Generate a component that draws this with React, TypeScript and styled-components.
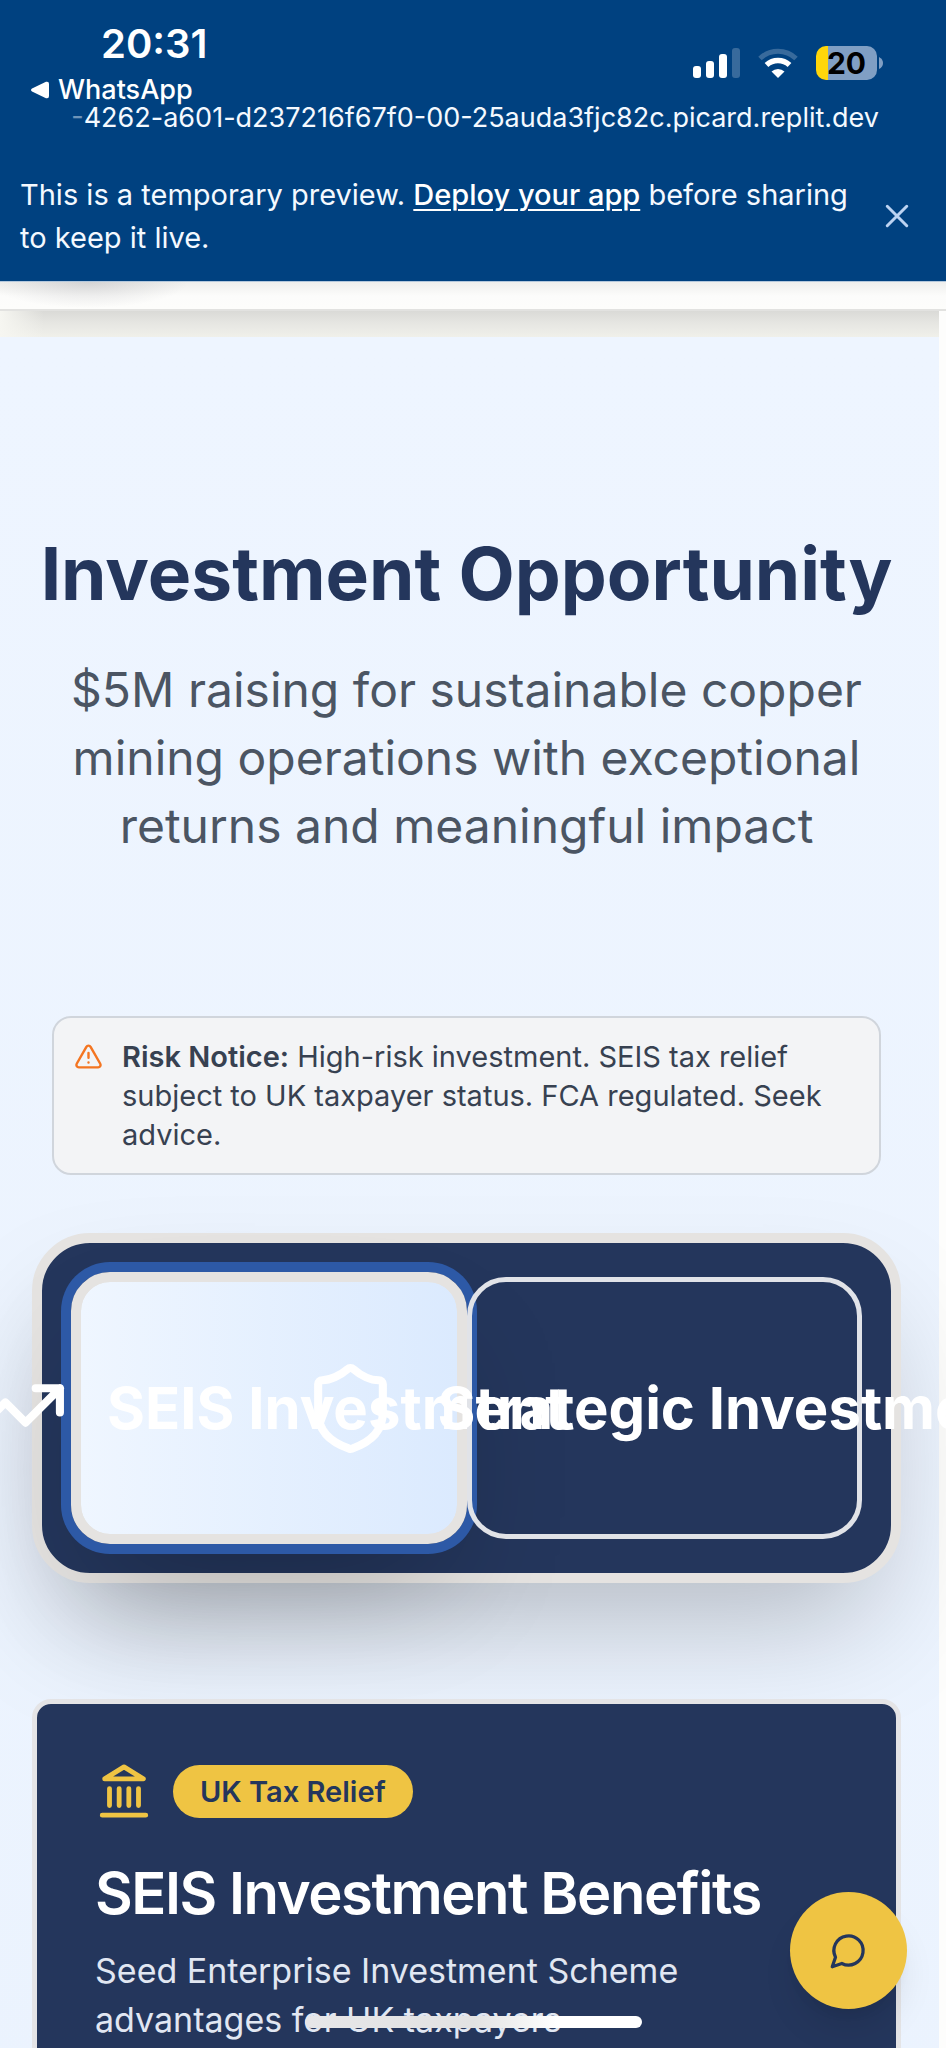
import React from "react";
import styled, { createGlobalStyle } from "styled-components";

const navy = "#24365c";
const gold = "#efc443";
const stone = "#e5e3e1";

const GlobalStyle = createGlobalStyle`
  * { box-sizing: border-box; }
  body {
    margin: 0;
    background: #fdfdfc;
    font-family: Inter, "Liberation Sans", sans-serif;
  }
  h1, h2, p { margin: 0; }
  button { font: inherit; color: inherit; cursor: pointer; }
`;

const Screen = styled.div`
  position: relative;
  display: flex;
  flex-direction: column;
  height: 100vh;
  overflow: hidden;
`;

const TopBar = styled.header`
  flex: none;
  background: #004180;
  color: #f4f9ff;
  border-bottom: 1px solid #b4c8dc;
`;

const StatusBar = styled.div`
  display: flex;
  justify-content: space-between;
  align-items: flex-start;
  padding: 24px 63px 0 31px;
`;

const StatusLeft = styled.div`
  display: flex;
  flex-direction: column;
  gap: 11px;
`;

const Time = styled.time`
  padding-left: 70px;
  font-size: 40px;
  line-height: 40px;
  font-weight: 600;
  color: #fff;
`;

const BackLink = styled.a`
  display: flex;
  align-items: center;
  gap: 9px;
  font-size: 27px;
  line-height: 30px;
  font-weight: 500;
  color: #fff;
  text-decoration: none;
`;

const StatusIcons = styled.div`
  display: flex;
  align-items: center;
  gap: 18px;
  padding-top: 22px;
`;

const Battery = styled.div`
  display: flex;
  align-items: center;
  gap: 2px;
`;

const BatteryBody = styled.span`
  display: block;
  width: 61px;
  height: 34px;
  border-radius: 10px;
  background: linear-gradient(90deg, #ffd60a 12px, #809fc4 12px);
  color: #000;
  font-size: 30px;
  line-height: 34px;
  font-weight: 700;
  text-align: center;
`;

const Address = styled.div`
  padding: 0 67px;
  font-size: 27px;
  line-height: 26px;
  text-align: right;
  white-space: nowrap;
`;

const Faded = styled.span`
  opacity: 0.45;
`;

const Banner = styled.div`
  display: flex;
  align-items: center;
  justify-content: space-between;
  gap: 24px;
  padding: 42px 31px 22px 20px;
`;

const BannerText = styled.p`
  font-size: 29px;
  line-height: 43px;

  a {
    color: #fff;
    font-weight: 500;
    text-underline-offset: 4px;
    text-decoration-thickness: 2px;
  }
`;

const CloseButton = styled.button`
  flex: none;
  display: flex;
  padding: 0;
  border: 0;
  background: none;
  color: #bcd3f2;
`;

const NavEdge = styled.div`
  flex: none;
  height: 29px;
  border-bottom: 2px solid #e2e2e0;
  background:
    radial-gradient(100px 26px at 88px 0, rgba(70, 70, 80, 0.16), rgba(70, 70, 80, 0)),
    linear-gradient(#efefed, #fcfcfb 14px, #fdfdfb);
`;

const Scroller = styled.main`
  flex: 1;
  min-height: 0;
  overflow: hidden;
`;

const NavShadow = styled.div`
  height: 26px;
  margin-right: 7px;
  background:
    linear-gradient(90deg, #f6f6f1, rgba(246, 246, 241, 0) 44px),
    linear-gradient(#dadad7, #e6e6e2 12px, #f0f0ea);
`;

const Section = styled.section`
  display: flex;
  flex-direction: column;
  margin-right: 7px;
  padding: 193px 38px 58px 32px;
  background: linear-gradient(#eef5ff, #ebf3fe);
`;

const Title = styled.h1`
  color: ${navy};
  font-size: 73px;
  line-height: 88px;
  font-weight: 700;
  text-align: center;
  white-space: nowrap;
`;

const Subtitle = styled.p`
  margin-top: 38px;
  padding: 0 20px;
  color: #4b5563;
  font-size: 48px;
  line-height: 68px;
  text-align: center;
`;

const Notice = styled.aside`
  display: flex;
  gap: 19px;
  margin: 156px 20px 58px;
  padding: 19px 20px;
  border: 2px solid #d0d5dc;
  border-radius: 19px;
  background: #f3f4f6;
  color: #374151;
  font-size: 29px;
  line-height: 39px;

  svg {
    flex: none;
    margin-top: 5px;
    color: #f47521;
  }
  strong { font-weight: 600; }
`;

const Tabs = styled.div`
  display: grid;
  grid-template-columns: 1fr 1fr;
  align-items: center;
  padding: 29px;
  border: 10px solid ${stone};
  border-radius: 58px;
  background: ${navy};
  box-shadow: 0 61px 121px -29px rgba(0, 0, 0, 0.25);
`;

const Tab = styled.button<{ $active?: boolean }>`
  display: flex;
  align-items: center;
  justify-content: center;
  gap: 39px;
  min-width: 0;
  height: ${(p) => (p.$active ? 272 : 262)}px;
  padding: 0;
  border: ${(p) => (p.$active ? 10 : 5)}px solid ${(p) => (p.$active ? stone : "#e1e3e8")};
  border-radius: 39px;
  background: ${(p) =>
    p.$active
      ? `linear-gradient(90deg, #eff6ff, #dbeafe) padding-box, linear-gradient(${stone}, ${stone}) border-box`
      : "transparent"};
  box-shadow: ${(p) =>
    p.$active ? "0 0 0 10px #2d59a6, 0 61px 121px -29px rgba(0, 0, 0, 0.25)" : "none"};
  color: #fff;
  font-size: 58px;
  line-height: 78px;
  font-weight: 700;
  white-space: nowrap;

  svg { flex: none; }
`;

const Card = styled.article`
  margin-top: 116px;
  padding: 58px;
  border: 5px solid #e4e4e6;
  border-radius: 19px;
  background: ${navy};
`;

const CardTop = styled.div`
  display: flex;
  align-items: center;
  gap: 20px;
  color: ${gold};
`;

const Pill = styled.span`
  padding: 0 27px;
  border-radius: 27px;
  background: ${gold};
  color: ${navy};
  font-size: 29px;
  line-height: 53px;
  font-weight: 600;
`;

const CardTitle = styled.h2`
  margin-top: 44px;
  color: #fff;
  font-size: 58px;
  line-height: 58px;
  font-weight: 600;
  letter-spacing: -0.025em;
`;

const CardText = styled.p`
  max-width: 640px;
  margin-top: 24px;
  color: #e1e7f2;
  font-size: 34px;
  line-height: 49px;
`;

const ChatButton = styled.button`
  position: absolute;
  right: 39px;
  bottom: 39px;
  display: flex;
  align-items: center;
  justify-content: center;
  width: 117px;
  height: 117px;
  padding: 0;
  border: 0;
  border-radius: 50%;
  background: ${gold};
  color: ${navy};
  box-shadow: 0 24px 36px -7px rgba(0, 0, 0, 0.1), 0 10px 15px -10px rgba(0, 0, 0, 0.1);
`;

const HomeIndicator = styled.div`
  position: absolute;
  left: 50%;
  bottom: 20px;
  width: 337px;
  height: 12px;
  margin-left: -168px;
  border-radius: 6px;
  background: linear-gradient(90deg, #e6e6e8, #e2e2e2 50%, #fff 75%);
`;

type IconProps = { size: number; children: React.ReactNode };

const LineIcon = ({ size, children }: IconProps) => (
  <svg
    width={size}
    height={size}
    viewBox="0 0 24 24"
    fill="none"
    stroke="currentColor"
    strokeWidth="2"
    strokeLinecap="round"
    strokeLinejoin="round"
    aria-hidden="true"
  >
    {children}
  </svg>
);

const SignalIcon = () => (
  <svg width="47" height="30" viewBox="0 0 47 30" fill="#fff" aria-hidden="true">
    <rect x="0" y="18" width="8" height="12" rx="3" />
    <rect x="13" y="13" width="8" height="17" rx="3" />
    <rect x="26" y="6" width="8" height="24" rx="3" />
    <rect x="39" y="0" width="8" height="30" rx="3" opacity="0.22" />
  </svg>
);

const WifiIcon = () => (
  <svg width="40" height="30" viewBox="0 0 40 30" fill="none" aria-hidden="true">
    <path d="M2 10.5a26 26 0 0 1 36 0" stroke="#fff" strokeWidth="5" opacity="0.22" />
    <path d="M8.500 17a17 17 0 0 1 23 0" stroke="#fff" strokeWidth="5.500" />
    <path d="M20 30l-6.500-6.500a9.500 9.500 0 0 1 13 0z" fill="#fff" />
  </svg>
);

export default function App() {
  return (
    <>
      <GlobalStyle />
      <Screen>
        <TopBar>
          <StatusBar>
            <StatusLeft>
              <Time>20:31</Time>
              <BackLink href="#whatsapp">
                <svg width="18" height="18" viewBox="0 0 18 18" fill="#fff" aria-hidden="true">
                  <path d="M1 7.500 15 .8Q18 0 18 3v12q0 3-3 2.200L1 10.500Q-1 9 1 7.500z" />
                </svg>
                WhatsApp
              </BackLink>
            </StatusLeft>
            <StatusIcons>
              <SignalIcon />
              <WifiIcon />
              <Battery>
                <BatteryBody>20</BatteryBody>
                <svg width="4" height="12" viewBox="0 0 4 12" fill="#809fc4" aria-hidden="true">
                  <path d="M0 0q4 2 4 6t-4 6z" />
                </svg>
              </Battery>
            </StatusIcons>
          </StatusBar>
          <Address>
            <Faded>-</Faded>4262-a601-d237216f67f0-00-25auda3fjc82c.picard.replit.dev
          </Address>
          <Banner>
            <BannerText>
              This is a temporary preview. <a href="#deploy">Deploy your app</a> before sharing to
              keep it live.
            </BannerText>
            <CloseButton aria-label="Close">
              <LineIcon size={36}>
                <path d="M18.500 5.500l-13 13M5.500 5.500l13 13" />
              </LineIcon>
            </CloseButton>
          </Banner>
        </TopBar>
        <NavEdge />
        <Scroller>
          <NavShadow />
          <Section>
            <Title>Investment Opportunity</Title>
            <Subtitle>
              $5M raising for sustainable copper mining operations with exceptional returns and
              meaningful impact
            </Subtitle>
            <Notice>
              <LineIcon size={29}>
                <path d="m21.730 18-8-14a2 2 0 0 0-3.480 0l-8 14A2 2 0 0 0 4 21h16a2 2 0 0 0 1.730-3" />
                <path d="M12 9v4M12 17h.01" />
              </LineIcon>
              <p>
                <strong>Risk Notice:</strong> High-risk investment. SEIS tax relief subject to UK
                taxpayer status. FCA regulated. Seek advice.
              </p>
            </Notice>
            <Tabs role="tablist">
              <Tab $active role="tab" aria-selected="true">
                <LineIcon size={97}>
                  <path d="M16 7h6v6M22 7l-8.500 8.500-5-5L2 17" />
                </LineIcon>
                SEIS Investment
              </Tab>
              <Tab role="tab" aria-selected="false">
                <LineIcon size={97}>
                  <path d="M20 13c0 5-3.500 7.500-7.660 8.950a1 1 0 0 1-.670-.010C7.500 20.500 4 18 4 13V6a1 1 0 0 1 1-1c2 0 4.500-1.200 6.240-2.720a1.170 1.170 0 0 1 1.520 0C14.510 3.810 17 5 19 5a1 1 0 0 1 1 1z" />
                </LineIcon>
                Strategic Investment
              </Tab>
            </Tabs>
            <Card>
              <CardTop>
                <LineIcon size={58}>
                  <path d="M3 22h18M6 18v-7M10 18v-7M14 18v-7M18 18v-7M12 2l8 5H4z" />
                </LineIcon>
                <Pill>UK Tax Relief</Pill>
              </CardTop>
              <CardTitle>SEIS Investment Benefits</CardTitle>
              <CardText>Seed Enterprise Investment Scheme advantages for UK taxpayers</CardText>
            </Card>
          </Section>
        </Scroller>
        <ChatButton aria-label="Open chat">
          <LineIcon size={39}>
            <path d="M7.900 20A9 9 0 1 0 4 16.100L2 22Z" />
          </LineIcon>
        </ChatButton>
        <HomeIndicator />
      </Screen>
    </>
  );
}
